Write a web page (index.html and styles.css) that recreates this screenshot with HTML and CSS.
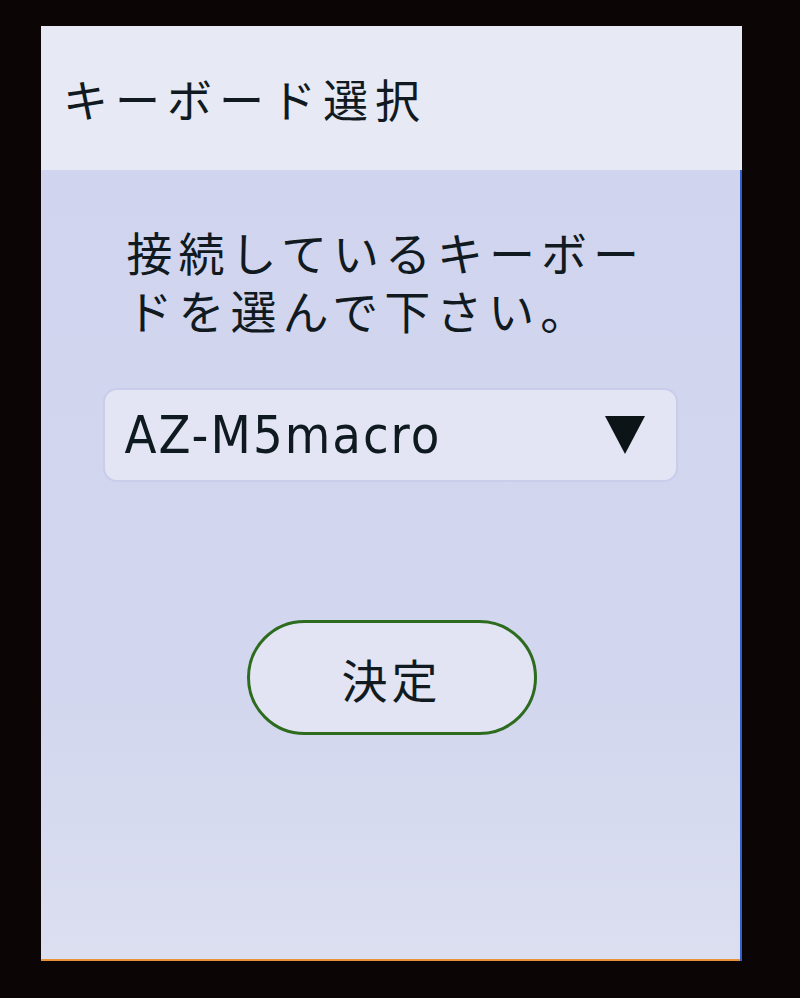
FILE: index.html
```html
<!DOCTYPE html>
<html lang="ja">
<head>
<meta charset="utf-8">
<title>キーボード選択</title>
<link rel="stylesheet" href="styles.css">
</head>
<body>
<div class="screen">
  <header class="header">
    <h1 class="title">キーボード選択</h1>
  </header>
  <main class="content">
    <p class="message"><span class="line">接続しているキーボー</span><span class="line">ドを選んで下さい。</span></p>
    <div class="select">
      <span class="select-value">AZ-M5macro</span>
      <svg class="select-arrow" width="42" height="40" viewBox="0 0 42 40" aria-hidden="true">
        <polygon points="1,1 41,1 21,39" fill="#0c1418"/>
      </svg>
    </div>
    <button class="confirm" type="button">決定</button>
  </main>
</div>
</body>
</html>
```

FILE: styles.css
```css
html, body {
  margin: 0;
  padding: 0;
  background: #0b0605;
  width: 800px;
  height: 998px;
  overflow: hidden;
}

.screen {
  margin: 26px 0 0 41px;
  width: 701px;
  height: 935px;
  display: flex;
  flex-direction: column;
  background: linear-gradient(180deg, #d0d4ee 0%, #d2d6ee 70%, #dcdff0 100%);
  box-shadow: inset 0 2px 0 #5a8ae0, inset -2px 0 0 #3060d0, inset 0 -2px 0 #e8903a;
  font-family: "Noto Sans CJK JP", "Noto Sans", sans-serif;
  color: #101a20;
}

.header {
  height: 144px;
  flex: none;
  display: flex;
  align-items: center;
  padding-left: 22px;
  background: #e7e9f4;
}

.title {
  margin: 0;
  font-size: 45px;
  font-weight: 400;
  letter-spacing: 7px;
  line-height: 1;
}

.content {
  display: flex;
  flex-direction: column;
  align-items: center;
  padding-top: 52px;
}

.message {
  margin: 0;
  width: 530px;
  display: flex;
  flex-direction: column;
  gap: 12px;
  font-size: 46px;
  line-height: 46px;
  letter-spacing: 6px;
  font-weight: 400;
  white-space: nowrap;
  padding-top: 6px;
}

.line {
  display: block;
}

.select {
  margin-top: 56px;
  width: 575px;
  height: 94px;
  box-sizing: border-box;
  display: flex;
  align-items: center;
  justify-content: space-between;
  padding: 0 30px 0 20px;
  background: #e3e5f4;
  border: 2px solid #c9cdea;
  border-radius: 14px;
  margin-left: -3px;
}

.select-value {
  font-family: "DejaVu Sans Condensed", "DejaVu Sans", sans-serif;
  font-size: 52px;
  letter-spacing: 2px;
  color: #0e1a20;
}

.select-arrow {
  display: block;
}

.confirm {
  margin-top: 138px;
  width: 290px;
  height: 115px;
  border: 3px solid #2d6b1e;
  border-radius: 58px;
  background: #e2e4f3;
  font-family: "Noto Sans CJK JP", sans-serif;
  font-size: 46px;
  letter-spacing: 4px;
  color: #101a20;
  padding: 0;
}
```
